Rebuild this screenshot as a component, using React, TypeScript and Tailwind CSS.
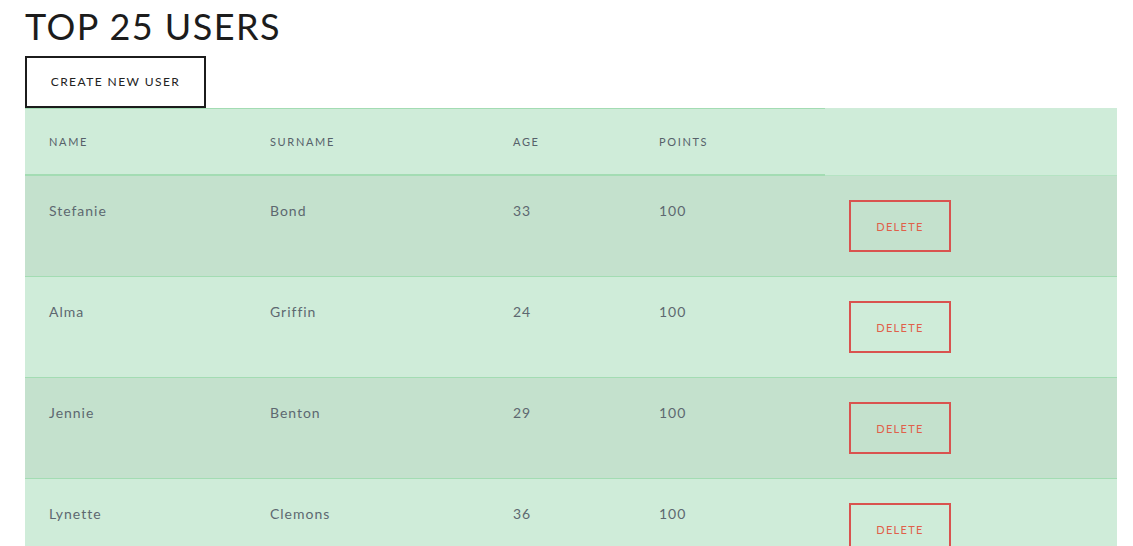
import React from "react";

type User = { name: string; surname: string; age: number; points: number };

const users: User[] = [
  { name: "Stefanie", surname: "Bond", age: 33, points: 100 },
  { name: "Alma", surname: "Griffin", age: 24, points: 100 },
  { name: "Jennie", surname: "Benton", age: 29, points: 100 },
  { name: "Lynette", surname: "Clemons", age: 36, points: 100 },
];

const cols = "grid grid-cols-[221px_243px_146px_190px_1fr]";

export default function App() {
  return (
    <main className="px-[25px] pr-[16px] font-['Lato',sans-serif] bg-white min-h-screen">
      {/* Heading */}
      <h1 className="text-[36px] leading-[52px] mb-[4px] tracking-[0.04em] text-[#1c1c1c] font-normal">
        TOP 25 USERS
      </h1>
      <button className="w-[181px] h-[52px] border-2 border-[#1c1c1c] text-[12px] tracking-[0.12em] text-[#222] bg-white">
        CREATE NEW USER
      </button>

      {/* Table */}
      <div className="bg-[#cfecd9]">
        <div className={cols}>
          {["NAME", "SURNAME", "AGE", "POINTS"].map((h) => (
            <div
              key={h}
              className="border-t border-b-2 border-[#a3dcb3] px-[24px] pt-[24px] pb-[24px] text-[11px] leading-[17px] tracking-[0.15em] text-[#56616a]"
            >
              {h}
            </div>
          ))}
          <div className="border-b border-[#b5e3c3]" />
        </div>
        {users.map((u, i) => (
          <div
            key={u.name}
            className={`${cols} border-b border-[#a3dcb3] text-[14px] leading-[21px] tracking-[0.07em] text-[#5d6870] ${
              i % 2 === 0 ? "bg-[#c4e1cd]" : "bg-[#cfecd9]"
            }`}
          >
            <div className="px-[24px] pt-[24px]">{u.name}</div>
            <div className="px-[24px] pt-[24px]">{u.surname}</div>
            <div className="px-[24px] pt-[24px]">{u.age}</div>
            <div className="px-[24px] pt-[24px]">{u.points}</div>
            <div className="px-[24px] py-[24px]">
              <button className="w-[102px] h-[52px] border-2 border-[#d9534f] text-[11px] tracking-[0.12em] text-[#e0604a]">
                DELETE
              </button>
            </div>
          </div>
        ))}
      </div>
    </main>
  );
}
